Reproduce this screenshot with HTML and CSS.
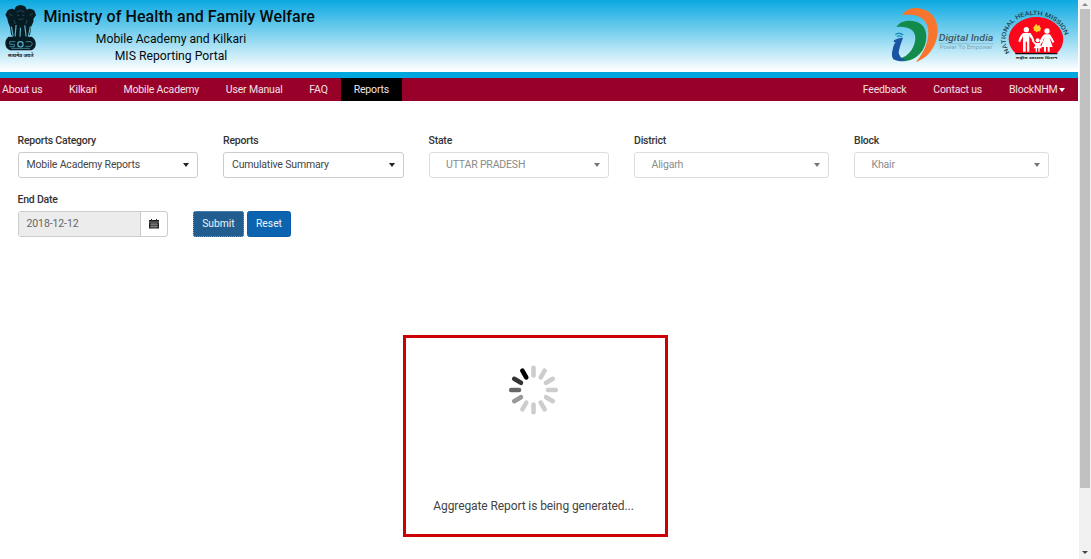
FILE: index.html
```html
<!DOCTYPE html>
<html lang="en">
<head>
<meta charset="utf-8">
<title>MIS Reporting Portal</title>
<link rel="stylesheet" href="styles.css">
</head>
<body>
<div class="window">
<div class="page">
  <header class="banner">
    <div class="brand">
      <svg class="emblem" viewBox="0 0 100 165">
        <g fill="#071b22">
          <path d="M31 17Q34 4 49 3q16 1 19 14 10-7 22 2l6 14-8 11 0 9-7 16-3 23-9 8H29l-8-8-3-22-6-15-2-11L4 32l7-13q11-8 20-2z"/>
          <path d="M13 98q-11 10-9 23 1 13 14 18h64q13-6 13-20 0-12-12-21z"/>
        </g>
        <g fill="none" stroke="#58b5cf" stroke-width="3.5">
          <path d="M36 63l-3 34M49 71l-1 27M62 64l4 33M22 68l5 28M79 67l-6 29"/>
          <path d="M37 24q12-9 24 0M39 34h7m8 0h7M43 44q7 6 15 0M14 30l11 5M76 34l11-5M30 48l3 12M69 48l-3 12" opacity=".45" stroke-width="2"/>
          <circle cx="49" cy="121" r="8"/>
          <path d="M34 113H17v8h14v7H16M65 113h15l5 6-5 8H64M22 133h56" stroke-width="2"/>
        </g>
        <text x="50" y="160" class="motto" textLength="76" lengthAdjust="spacingAndGlyphs">सत्यमेव जयते</text>
      </svg>
      <div class="titles">
        <h1 class="ministry">Ministry of Health and Family Welfare</h1>
        <div class="program">Mobile Academy and Kilkari</div>
        <div class="portal">MIS Reporting Portal</div>
      </div>
    </div>
    <svg class="logos" viewBox="0 0 594 216">
      <path fill="#f7752f" d="M66 46Q78 25 105 24c43 0 67 28 68 66 0 46-28 84-65 96 25-31 37-59 37-90-1-39-30-57-79-50z"/>
      <path fill="#138b4b" d="M49 81Q61 62 86 62c34 0 53 17 53 47 0 42-29 73-68 75q-13 1-15-8 24-4 38-25c18-26 25-76-45-70z"/>
      <path fill="#1a55a3" d="M42 121q12-9 27-8-10 25-13 43-1 15 22 25-25 6-38-3-8-9-1-34 3-12 8-18-3 0-6 1z"/>
      <g fill="none" stroke="#168dbd" stroke-width="4"><path d="M46 104q11-9 24 1M51 110q7-5 14 1"/></g>
      <text x="176" y="124" class="digital" textLength="164" lengthAdjust="spacingAndGlyphs">Digital India</text>
      <path d="M178 131h162" stroke="#7da1ac" stroke-width="1.5"/>
      <text x="179" y="147" class="power" textLength="158" lengthAdjust="spacingAndGlyphs">Power To Empower</text>
      <path fill="#fb071b" d="M406 160C375 130 382 91 414 68c34-24 85-23 114 5 29 26 28 63 3 87z"/>
      <path d="M406 161h126" stroke="#101416" stroke-width="4"/>
      <path fill="#ffcf30" d="M470 73l3 4 6-1 1 6 4 3-3 4 0 5-6 0-5 3-4-4-5-1 1-5-3-4 5-4 1-5z"/>
      <g fill="#fff">
        <circle cx="439" cy="89" r="8"/><path d="M429 99h22q7 7 12 22l-4 3-11-16v47h-7v-30h-4v30h-8v-47l-9 19-5-3q5-18 14-25z"/>
        <circle cx="501" cy="93" r="8"/><path d="M494 103h15q6 6 14 23l-5 3-10-17 10 29h-9v14h-6v-14h-5v14h-6v-14h-9l11-29-10 16-5-4q8-18 15-21z"/>
        <circle cx="473" cy="121" r="6"/><path d="M468 129h10l9-10 3 3-9 13 5 10h-7v10h-4v-10h-4v10h-4v-10h-6l5-10-11-13 3-3z"/>
      </g>
      <path id="mission-arc" fill="none" d="M390 157C360 118 385 70 420 54c40-18 90-8 117 21 20 24 28 52 17 83"/>
      <text class="mission"><textPath href="#mission-arc" textLength="286" lengthAdjust="spacingAndGlyphs">NATIONAL HEALTH MISSION</textPath></text>
      <text x="407" y="176" class="mission-hindi" textLength="125" lengthAdjust="spacingAndGlyphs">राष्ट्रीय स्वास्थ्य मिशन</text>
    </svg>
  </header>
  <nav class="nav">
    <div class="nav-group nav-left">
      <a>About us</a><a>Kilkari</a><a>Mobile Academy</a><a>User Manual</a><a>FAQ</a><a class="active">Reports</a>
    </div>
    <div class="nav-group nav-right">
      <a>Feedback</a><a>Contact us</a><a>BlockNHM<i class="caret light"></i></a>
    </div>
  </nav>
  <main class="content">
    <div class="filters">
      <div class="field"><label>Reports Category</label><div class="select"><span>Mobile Academy Reports</span><i class="caret"></i></div></div>
      <div class="field"><label>Reports</label><div class="select"><span>Cumulative Summary</span><i class="caret"></i></div></div>
      <div class="field"><label>State</label><div class="select disabled"><span>UTTAR PRADESH</span><i class="caret"></i></div></div>
      <div class="field"><label>District</label><div class="select disabled"><span>Aligarh</span><i class="caret"></i></div></div>
      <div class="field"><label>Block</label><div class="select disabled"><span>Khair</span><i class="caret"></i></div></div>
    </div>
    <div class="actions">
      <div class="field date-field">
        <label>End Date</label>
        <div class="date"><span class="date-value">2018-12-12</span><span class="date-button">
          <svg class="calendar" viewBox="0 0 10 10"><path fill="#222" d="M0 1h2V0h1v1h4V0h1v1h2v8.5H0z"/><path stroke="#aaa" stroke-width=".6" d="M0 3.1h10M1 5.2h8M1 7.4h8M3 4v5M5 4v5M7 4v5"/></svg>
        </span></div>
      </div>
      <button class="button submit">Submit</button>
      <button class="button">Reset</button>
    </div>
    <div class="loader">
      <svg class="spinner" viewBox="-25 -25 50 50" stroke-width="4.6" stroke-linecap="round" stroke="#cdcdcd">
        <path d="M0-14.5V-22.3"/>
        <path d="M0-14.5V-22.3" transform="rotate(30)"/>
        <path d="M0-14.5V-22.3" transform="rotate(60)"/>
        <path d="M0-14.5V-22.3" transform="rotate(90)"/>
        <path d="M0-14.5V-22.3" transform="rotate(120)"/>
        <path d="M0-14.5V-22.3" transform="rotate(150)"/>
        <path d="M0-14.5V-22.3" transform="rotate(180)"/>
        <path d="M0-14.5V-22.3" transform="rotate(210)"/>
        <path d="M0-14.5V-22.3" transform="rotate(240)" stroke="#999"/>
        <path d="M0-14.5V-22.3" transform="rotate(270)" stroke="#666"/>
        <path d="M0-14.5V-22.3" transform="rotate(300)" stroke="#333"/>
        <path d="M0-14.5V-22.3" transform="rotate(330)" stroke="#000"/>
      </svg>
      <p class="loader-text">Aggregate Report is being generated...</p>
    </div>
  </main>
</div>
<div class="scrollbar">
  <svg class="arrow" viewBox="0 0 12 9"><path fill="#8b8b8b" d="M3 6l3-3 3 3z"/></svg>
  <div class="track"><div class="thumb"></div></div>
  <svg class="arrow" viewBox="0 0 12 9"><path fill="#444" d="M3 1h6L6 4z"/></svg>
</div>
</div>
</body>
</html>
```
FILE: styles.css
```css
* { box-sizing: border-box; }
body { margin: 0; background: #fff; font-family: Roboto, sans-serif; font-size: 10.5px; letter-spacing: -.17px; color: #333; }
.window { display: flex; width: 1091px; height: 559px; overflow: hidden; }
.page { width: 1078px; margin-right: 1px; }
.banner { height: 78px; display: flex; justify-content: space-between; background: linear-gradient(#0ba9e1 0, #fff 71px, #fff 72px); border-bottom: 6px solid #00a7df; }
.brand { display: flex; padding-left: 4px; }
.emblem { width: 33.5px; height: 55px; margin-top: 4px; }
.motto { font: 700 13px "Noto Sans", sans-serif; letter-spacing: 0; text-anchor: middle; fill: #123; }
.titles { width: 266px; text-align: center; color: #050b0d; white-space: nowrap; letter-spacing: 0; }
.ministry { margin: 7px 0 0 6px; font-size: 16px; line-height: 20px; font-weight: 500; letter-spacing: .09px; }
.program { font-size: 12.2px; line-height: 18px; margin: 3px 0 0 1px; }
.portal { font-size: 12.2px; line-height: 17px; margin-left: 1px; }
.logos { width: 198px; height: 72px; letter-spacing: 0; }
.digital { font: italic 500 27px Roboto, sans-serif; fill: #3d5964; }
.power { font: 15px Roboto, sans-serif; fill: #82a7b4; }
.mission { font: 500 18px Roboto, sans-serif; fill: #20414d; }
.mission-hindi { font: 700 11px "Noto Sans", sans-serif; fill: #1b1b25; }
.nav { height: 23px; margin-bottom: .5px; display: flex; justify-content: space-between; background: #980029; color: #f3e1e7; line-height: 23px; }
.nav-group { display: flex; white-space: nowrap; }
.nav a { display: block; padding: 0 13.35px; }
.nav-left a:first-child { padding-left: 2px; }
.nav .active { background: #000; padding: 0 12.5px; }
.nav .nav-right a { padding: 0 13.4px; }
.caret { display: inline-block; width: 0; height: 0; border: 3.5px solid transparent; border-top: 4px solid #222; border-bottom: 0; }
.caret.light { border-top-color: #fff; margin-left: 1px; vertical-align: 1px; }
.content { padding: 32px 0 0 17.5px; }
.filters { display: grid; grid-template-columns: 180.500px 180.500px 180.500px 195px 195px; column-gap: 25px; height: 58.5px; }
.field label { display: block; height: 18.5px; line-height: 14px; font-weight: 500; letter-spacing: -.22px; }
.select { height: 25.5px; border: 1px solid #ccc; border-radius: 3px; display: flex; align-items: center; justify-content: space-between; padding: 0 8px; color: #454545; }
.select.disabled { border-color: #ddd; color: #8b8b8b; padding-left: 16.5px; }
.disabled .caret { border-top-color: #777; }
.actions { display: flex; align-items: flex-end; height: 44.5px; }
.date-field { width: 150.5px; margin-right: 25px; }
.date { display: flex; height: 25.5px; border: 1px solid #ccc; border-radius: 3px; overflow: hidden; }
.date-value { width: 122px; background: #ececec; border-right: 1px solid #ccc; padding-left: 8px; line-height: 24px; color: #666; letter-spacing: -.1px; }
.date-button { flex: 1; display: grid; place-items: center; }
.calendar { width: 10px; height: 10px; }
.button { width: 44px; height: 25.500px; border: 1px solid #0c5dac; border-radius: 2.5px; background: #0c64b1; color: #edf5fa; font: 10.3px Roboto, sans-serif; padding: 0; }
.submit { width: 51px; height: 26px; margin-right: 3px; background: #215e8f; border-color: #174d83; outline: 1px dotted #72acd5; outline-offset: -1px; }
.loader { margin: 98px 0 0 385.5px; width: 265px; height: 202px; border: 3.5px solid #cc0004; display: flex; flex-direction: column; align-items: center; padding-top: 27px; }
.spinner { width: 50px; height: 50px; transform: translateX(-2.500px); }
.loader-text { margin: 83px 0 0; transform: translateX(-2px); font-size: 12px; line-height: 16px; letter-spacing: -.1px; white-space: nowrap; color: #444; }
.scrollbar { width: 12px; background: #f1f1f1; display: flex; flex-direction: column; }
.arrow { width: 12px; height: 9px; }
.track { flex: 1; padding: 0 1px; }
.thumb { height: 479px; background: #c1c1c1; }
```
